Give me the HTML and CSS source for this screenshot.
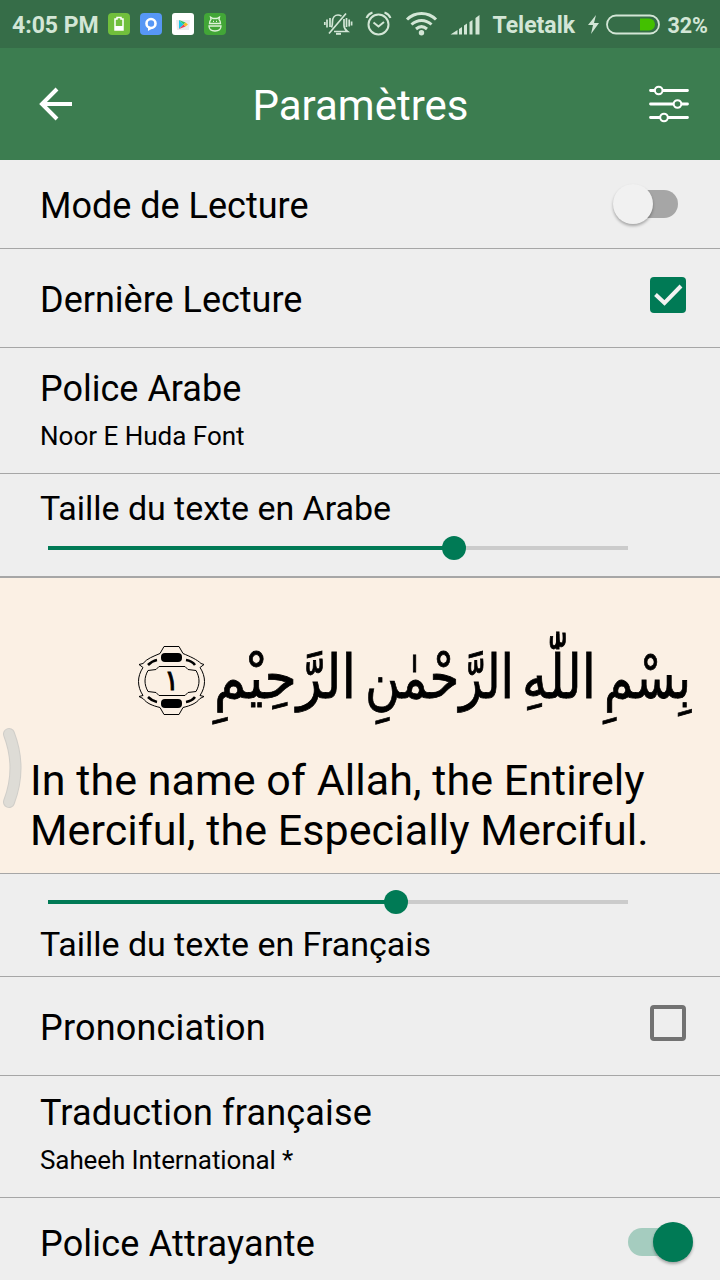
FILE: index.html
```html
<!DOCTYPE html>
<html lang="fr">
<head>
  <meta charset="UTF-8">
  <meta name="viewport" content="width=device-width, initial-scale=1.0">
  <title>Paramètres</title>
  <link rel="stylesheet" href="styles.css">
</head>
<body>
  <header class="status-bar">
    <span class="clock">4:05 PM</span>
    <svg class="notifications" width="120" height="24" viewBox="0 0 120 24">
      <rect x="1" y="1" width="22" height="22" rx="4" fill="#71bf3c"/>
      <path d="M8 7h2V5.500h4V7h2v11H8z" fill="none" stroke="#fff" stroke-width="1.500"/>
      <path d="M8 14h8v4H8z" fill="#fff"/>
      <rect x="33" y="1" width="22" height="22" rx="4" fill="#5797f5"/>
      <circle cx="44" cy="11.500" r="4.500" fill="none" stroke="#fff" stroke-width="2.600"/>
      <path d="M41 14l0 5 5-3z" fill="#fff"/>
      <rect x="65" y="1" width="22" height="22" rx="3" fill="#fff"/>
      <path d="M69 8h14l-1 10H70z" fill="#e9eaec"/>
      <path d="M72 8v9l4.500-4.500z" fill="#16c8ee"/>
      <path d="M72 8l4.500 4.500 2-2z" fill="#33c468"/>
      <path d="M72 17l4.500-4.500 2 2z" fill="#ed3f57"/>
      <path d="M76.500 12.500l2-2 2.500 2-2.500 2z" fill="#f8bd22"/>
      <rect x="97" y="1" width="22" height="22" rx="4" fill="#42a637"/>
      <path d="M102.500 11.500c0-2 .5-3 1.500-4l-.5-2.500 2.500 1.500h4l2.500-1.500-.5 2.500c1 1 1.500 2 1.500 4zM102 14c0 3 2 5 6 5s6-2 6-5zM106 9.300h1M109 9.300h1" fill="none" stroke="#def2d8" stroke-width="1.300"/>
    </svg>
    <svg class="system-icons" width="160" height="28" viewBox="0 0 160 28">
      <g fill="none" stroke="#d3e6d6" stroke-width="1.700">
        <path d="M22 3.500L5 23.500M7.500 17.500c1-1.500 1-3 1-6C8.500 7.500 11 5 14 5c1.500 0 2.500.5 3.500 1M10 21.500h13.500c-2-1.500-3.500-3.500-3.500-6V9M3 9.500v8M6 8v9M.8 12v3M22.500 8v9M25.200 9.500v7M27.600 11.500v4"/>
        <path d="M12 23.800h5" stroke-width="2"/>
        <circle cx="54.500" cy="14.500" r="10" stroke-width="2"/>
        <path d="M49.500 12.500l5 4 5.500-4.500" stroke-width="2"/>
        <path d="M42.500 8c1-2.500 3-4.500 6-5.500M60.500 2.500c3 1 5 3 6 5.500" stroke-width="2"/>
      </g>
      <g fill="none" stroke="#d3e6d6" stroke-width="3">
        <path d="M83 9.500c8-8 21-8 29 0M87.500 14.500c6-5.500 14-5.500 20 0M92 19c3.500-3 7.500-3 11 0"/>
      </g>
      <circle cx="97.500" cy="22.800" r="2.700" fill="#d3e6d6"/>
      <path d="M126.500 24.500l7-4.500v4.500zM135 19l3-2v7.500h-3zM140 15.500l3-2v11h-3zM145.500 12l3-2v14.500h-3zM151.500 8l4-3v19.500h-4z" fill="#d3e6d6"/>
    </svg>
    <span class="carrier">Teletalk</span>
    <svg class="battery" width="76" height="26" viewBox="0 0 76 26">
      <path d="M10 4L2 14h5l-2 9 8-11H8z" fill="#d3e6d6"/>
      <rect x="21" y="4.500" width="52" height="18" rx="9" fill="none" stroke="#d3e6d6" stroke-width="1.800"/>
      <path d="M54 7.500h9a6 6 0 0 1 0 12h-9z" fill="#43c000"/>
    </svg>
    <span class="percent">32%</span>
  </header>

  <nav class="app-bar">
    <svg class="back" width="34" height="34" viewBox="0 0 34 34">
      <path d="M33 17H4M18 2L3 17l15 15" fill="none" stroke="#fff" stroke-width="4"/>
    </svg>
    <h1>Paramètres</h1>
    <svg class="tune" width="42" height="40" viewBox="0 0 42 40">
      <g stroke="#fff" stroke-width="2.800" stroke-linecap="round">
        <path d="M2.500 6.500h37M2.500 20h37M2.500 33.500h37"/>
      </g>
      <g fill="#3c7d50" stroke="#fff" stroke-width="2">
        <circle cx="10.700" cy="6.500" r="3.800"/>
        <circle cx="29.500" cy="20" r="3.800"/>
        <circle cx="16" cy="33.500" r="3.800"/>
      </g>
    </svg>
  </nav>

  <main class="settings">
    <section class="row row-mode">
      <span class="label">Mode de Lecture</span>
      <span class="switch"><span class="thumb"></span></span>
    </section>
    <section class="row row-check">
      <span class="label">Dernière Lecture</span>
      <span class="checkbox checked">
        <svg width="36" height="36" viewBox="0 0 36 36"><path d="M5.500 17.500l9 8.500L31 9" fill="none" stroke="#f2f2f2" stroke-width="4"/></svg>
      </span>
    </section>
    <section class="row row-font">
      <div>
        <div class="label">Police Arabe</div>
        <div class="value">Noor E Huda Font</div>
      </div>
    </section>
    <section class="size-row size-arabic">
      <div class="size-label">Taille du texte en Arabe</div>
      <div class="slider"><div class="fill" style="width: 70%"></div><div class="knob"></div></div>
    </section>

    <section class="preview">
      <svg class="verse" width="720" height="178" viewBox="0 578 720 178" lang="ar">
        <g class="verse-text">
          <text x="604" y="698" textLength="87" lengthAdjust="spacingAndGlyphs">بِسْمِ</text>
          <text x="522" y="698" textLength="74" lengthAdjust="spacingAndGlyphs">اللّٰهِ</text>
          <text x="365" y="698" textLength="149" lengthAdjust="spacingAndGlyphs">الرَّحْمٰنِ</text>
          <text x="214" y="698" textLength="142" lengthAdjust="spacingAndGlyphs">الرَّحِيْمِ</text>
          <text class="verse-number" x="164" y="690">١</text>
        </g>
        <g fill="none" stroke="#000" stroke-width="1">
          <path d="M164 646.500h15l4 7c7 3 14 6 18 10l3 1-4 3c6 9 6 19 0 28l4 1-4 2c-4 5-9 7-17 9l-4 7h-15l-4-7c-8-2-13-4-17-9l-4-2 4-1c-6-9-6-19 0-28l-4-3 4-1c4-5 10-7 17-10z"/>
          <path d="M159 666.500h26l3 3 8 1c4 7 4 14 0 21l-8 1-3 3h-26l-3-3-8-1c-4-7-4-14 0-21l8-1z"/>
        </g>
        <g>
          <rect x="161" y="653" width="21" height="9" rx="4"/>
          <rect x="161" y="699" width="21" height="9" rx="4"/>
        </g>
        <path d="M148 665q4-4 9-5M186 660q6 1 9 5M148 697q4 4 9 5M186 702q6-1 9-5" fill="none" stroke="#000" stroke-width="2.600"/>
      </svg>
      <p class="translation">In the name of Allah, the Entirely<br>Merciful, the Especially Merciful.</p>
      <svg class="edge-handle" width="24" height="84" viewBox="0 0 24 84">
        <path d="M9 8q13 34 0 68" fill="none" stroke="#d0cec9" stroke-width="12" stroke-linecap="round"/>
        <path d="M9 8q13 34 0 68" fill="none" stroke="#dedcd6" stroke-width="10" stroke-linecap="round"/>
      </svg>
    </section>

    <section class="size-row size-french">
      <div class="slider"><div class="fill" style="width: 60%"></div><div class="knob"></div></div>
      <div class="size-label">Taille du texte en Français</div>
    </section>
    <section class="row row-check">
      <span class="label wide">Prononciation</span>
      <span class="checkbox"></span>
    </section>
    <section class="row row-translation">
      <div>
        <div class="label wide">Traduction française</div>
        <div class="value tight">Saheeh International *</div>
      </div>
    </section>
    <section class="row row-last">
      <span class="label wide">Police Attrayante</span>
      <span class="switch on"><span class="thumb"></span></span>
    </section>
  </main>
</body>
</html>
```
FILE: styles.css
```css
* {
  box-sizing: border-box;
}
body {
  margin: 0;
  width: 720px;
  height: 1280px;
  overflow: hidden;
  background: #eee;
  color: #000;
  font-family: Roboto, sans-serif;
}
svg {
  display: block;
  flex: none;
  overflow: visible;
}
.status-bar {
  display: flex;
  align-items: center;
  height: 48px;
  padding: 2px 12px 0;
  background: #366d48;
  color: #d3e6d6;
  font-size: 23px;
  font-weight: 700;
  white-space: nowrap;
}
.clock {
  width: 96px;
}
.notifications {
  margin-top: -3px;
}
.system-icons {
  margin: -3px 0 0 97px;
}
.carrier {
  width: 82px;
  margin-left: 8px;
}
.battery {
  margin-left: 12px;
  margin-top: -3px;
}
.percent {
  margin-left: 5px;
  font-size: 21.5px;
}
.app-bar {
  display: flex;
  align-items: center;
  justify-content: space-between;
  height: 112px;
  padding: 0 30px 0 39px;
  background: #3c7d50;
  color: #fff;
}
.app-bar h1 {
  margin: 2px 0 0;
  font-size: 42px;
  font-weight: 400;
}
.row {
  display: flex;
  justify-content: space-between;
  border-bottom: 1px solid #a6a6a6;
  padding-left: 40px;
  padding-right: 34px;
}
.label {
  font-size: 36px;
  line-height: 42px;
}
.label.wide {
  letter-spacing: 0.18px;
}
.value {
  margin-top: 11px;
  font-size: 26px;
  line-height: 30px;
}
.value.tight {
  letter-spacing: -0.1px;
}
.row-mode {
  height: 89px;
  padding-top: 25px;
}
.row-check {
  height: 99px;
  padding-top: 30px;
}
.row-font {
  height: 126px;
  padding-top: 20px;
}
.row-translation {
  height: 122px;
  padding-top: 16px;
}
.row-last {
  height: 82px;
  padding-top: 25px;
  border-bottom: 0;
}
.switch {
  display: flex;
  align-items: center;
  width: 58px;
  height: 28px;
  margin: 5px 8px 0 0;
  border-radius: 14px;
  background: #a6a6a6;
}
.thumb {
  flex: none;
  width: 40px;
  height: 40px;
  margin-left: -7px;
  border-radius: 50%;
  background: #f1f1f1;
  box-shadow: 0 2px 3px rgba(0, 0, 0, 0.3);
}
.switch.on {
  margin-right: 0;
  background: #a5ccbf;
}
.on .thumb {
  margin-left: 25px;
  background: #007a55;
}
.checkbox {
  width: 36px;
  height: 36px;
  margin-top: -2px;
  border: 4px solid #727272;
  border-radius: 4px;
}
.checkbox.checked {
  border: 0;
  background: #007a55;
}
.size-row {
  padding-left: 40px;
}
.size-arabic {
  height: 104px;
  padding-top: 14px;
  border-bottom: 2px solid #a6a6a6;
}
.size-french {
  height: 103px;
  padding-top: 16px;
  border-bottom: 1px solid #a6a6a6;
}
.size-label {
  font-size: 34px;
  line-height: 40px;
  letter-spacing: -0.04px;
}
.slider {
  display: flex;
  align-items: center;
  width: 580px;
  height: 24px;
  margin-left: 8px;
  background: linear-gradient(#cbcbcb, #cbcbcb) center / 100% 4px no-repeat;
}
.size-arabic .slider {
  margin-top: 8px;
}
.size-french .size-label {
  margin-top: 10px;
}
.fill {
  height: 4px;
  background: #007a55;
}
.knob {
  width: 24px;
  height: 24px;
  margin-left: -12px;
  border-radius: 50%;
  background: #007a55;
}
.preview {
  position: relative;
  height: 296px;
  border-bottom: 1px solid #a6a6a6;
  background: #fbf0e4;
}
.verse-text {
  font-family: "DejaVu Sans", sans-serif;
  font-size: 60px;
  stroke: #000;
  stroke-width: 0.8px;
}
.verse-number {
  font-size: 28px;
}
.translation {
  margin: -1px 0 0 30px;
  font-size: 43px;
  line-height: 50px;
  letter-spacing: 0.06px;
  white-space: nowrap;
}
.edge-handle {
  position: absolute;
  left: 0;
  top: 148px;
}
```
